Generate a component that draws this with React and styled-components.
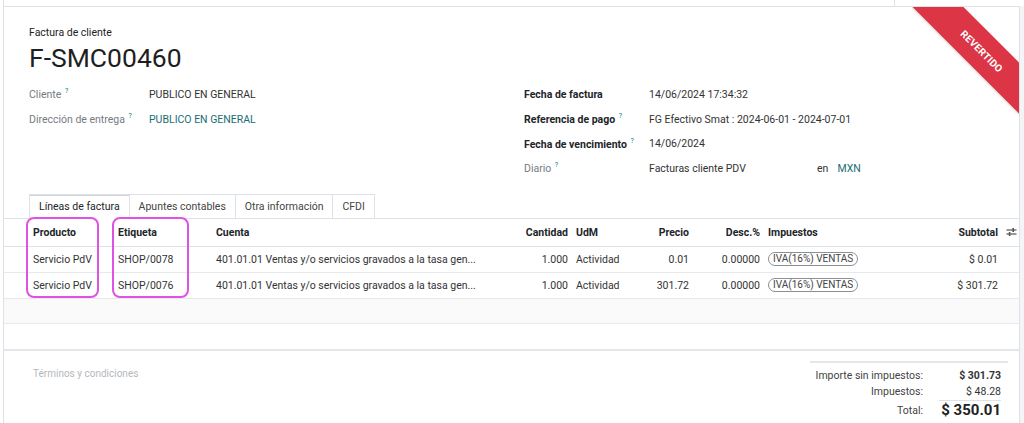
import React from "react";
import styled, { createGlobalStyle } from "styled-components";

const GlobalStyle = createGlobalStyle`
  html, body {
    margin: 0;
    padding: 0;
    background: #fff;
    font-family: Roboto, "Liberation Sans", Arial, sans-serif;
    color: #212529;
  }
`;

const lines = [
  { product: "Servicio PdV", label: "SHOP/0078", price: "0.01", subtotal: "$ 0.01" },
  { product: "Servicio PdV", label: "SHOP/0076", price: "301.72", subtotal: "$ 301.72" }
];

const columns = [
  { title: "Producto", width: 110, pad: "0 4px 0 29px" },
  { title: "Etiqueta", width: 98 },
  { title: "Cuenta", width: 300 },
  { title: "Cantidad", width: 60, right: true },
  { title: "UdM", width: 58 },
  { title: "Precio", width: 63, right: true },
  { title: "Desc.%", width: 71, right: true },
  { title: "Impuestos", width: 96 },
  { title: "Subtotal", width: 142, right: true },
  { title: "", width: 17 }
];

const Help = () => <Sup>?</Sup>;

const SlidersIcon = () => (
  <svg width="11" height="10" viewBox="0 0 11 10" fill="none">
    <line x1="0.5" y1="3" x2="10.5" y2="3" stroke="#555" strokeWidth="1.2" />
    <line x1="0.5" y1="7" x2="10.5" y2="7" stroke="#555" strokeWidth="1.2" />
    <rect x="6.4" y="1" width="1.6" height="4" fill="#555" />
    <rect x="2.8" y="5" width="1.6" height="4" fill="#555" />
  </svg>
);

export default function App() {
  return (
    <Page>
      <GlobalStyle />
      <TopStrip>
        <StripCell />
        <StripCell $narrow />
      </TopStrip>
      <Body>
        <Sheet>
          <Ribbon>
            <RibbonBand>REVERTIDO</RibbonBand>
          </Ribbon>
          <Header>
            <Subtitle>Factura de cliente</Subtitle>
            <Title>F-SMC00460</Title>
            <Groups>
              <Group $labelWidth={120}>
                <Label>
                  Cliente <Help />
                </Label>
                <Value>PUBLICO EN GENERAL</Value>
                <Label>
                  Dirección de entrega <Help />
                </Label>
                <Value $link>PUBLICO EN GENERAL</Value>
              </Group>
              <Group $labelWidth={125}>
                <Label $strong>Fecha de factura</Label>
                <Value>14/06/2024 17:34:32</Value>
                <Label $strong>
                  Referencia de pago <Help />
                </Label>
                <Value>FG Efectivo Smat : 2024-06-01 - 2024-07-01</Value>
                <Label $strong>
                  Fecha de vencimiento <Help />
                </Label>
                <Value>14/06/2024</Value>
                <Label>
                  Diario <Help />
                </Label>
                <Value>
                  <Journal>Facturas cliente PDV</Journal>
                  <span>en</span>
                  <Currency>MXN</Currency>
                </Value>
              </Group>
            </Groups>
          </Header>

          <Tabs>
            <Tab $active>Líneas de factura</Tab>
            <Tab>Apuntes contables</Tab>
            <Tab>Otra información</Tab>
            <Tab>CFDI</Tab>
          </Tabs>

          <TableWrap>
            <Table>
              <colgroup>
                {columns.map((c, i) => (
                  <col key={i} style={{ width: c.width }} />
                ))}
              </colgroup>
              <thead>
                <tr>
                  {columns.map((c, i) => (
                    <Th key={i} $right={c.right} $pad={c.pad}>
                      {i === columns.length - 1 ? <SlidersIcon /> : c.title}
                    </Th>
                  ))}
                </tr>
              </thead>
              <tbody>
                {lines.map((l, i) => (
                  <Row key={i}>
                    <Td $pad="0 4px 0 29px">{l.product}</Td>
                    <Td>{l.label}</Td>
                    <Td>401.01.01 Ventas y/o servicios gravados a la tasa gen...</Td>
                    <Td $right>1.000</Td>
                    <Td>Actividad</Td>
                    <Td $right>{l.price}</Td>
                    <Td $right>0.00000</Td>
                    <Td>
                      <TaxPill>IVA(16%) VENTAS</TaxPill>
                    </Td>
                    <Td $right>{l.subtotal}</Td>
                    <Td />
                  </Row>
                ))}
                <EmptyRow>
                  <td colSpan={columns.length} />
                </EmptyRow>
              </tbody>
            </Table>
            <Highlight $left={22} $width={73} />
            <Highlight $left={108} $width={77} />
          </TableWrap>

          <Spacer />

          <Footer>
            <Terms>Términos y condiciones</Terms>
            <Totals>
              <TotalLabel>Importe sin impuestos:</TotalLabel>
              <TotalValue $strong>$ 301.73</TotalValue>
              <TotalLabel>Impuestos:</TotalLabel>
              <TotalValue>$ 48.28</TotalValue>
              <TotalLabel $big>Total:</TotalLabel>
              <GrandTotal>$ 350.01</GrandTotal>
            </Totals>
          </Footer>
        </Sheet>
        <Gutter />
      </Body>
    </Page>
  );
}

const Page = styled.div`
  width: 1024px;
  height: 423px;
  overflow: hidden;
  display: flex;
  flex-direction: column;
  background: #fff;
`;

const TopStrip = styled.div`
  height: 6px;
  display: flex;
  margin-left: 3px;
  margin-right: 4px;
  border-left: 1px solid #dee2e6;
`;

const StripCell = styled.div`
  flex: ${p => (p.$narrow ? "0 0 125px" : "1")};
  border-left: ${p => (p.$narrow ? "1px solid #dee2e6" : "none")};
`;

const Body = styled.div`
  flex: 1;
  display: flex;
  padding-left: 3px;
`;

const Sheet = styled.div`
  flex: 1;
  position: relative;
  overflow: hidden;
  background: #fff;
  border: 1px solid #dee2e6;
  border-bottom: none;
  display: flex;
  flex-direction: column;
`;

const Gutter = styled.div`
  width: 4px;
  background: #f4f5f7;
`;

const Ribbon = styled.div`
  position: absolute;
  top: 0;
  right: 0;
  width: 107px;
  height: 107px;
  overflow: hidden;
  pointer-events: none;
`;

const RibbonBand = styled.div`
  position: absolute;
  left: -11px;
  top: 26px;
  width: 162px;
  height: 36px;
  transform: rotate(45deg);
  background: #dc3545;
  color: #fff;
  font-size: 10px;
  font-weight: 700;
  letter-spacing: 0.2px;
  display: flex;
  align-items: center;
  justify-content: center;
  box-shadow: 0 1px 3px rgba(0, 0, 0, 0.15);
`;

const Header = styled.div`
  padding: 19px 25px 0;
`;

const Subtitle = styled.div`
  font-size: 10.5px;
  line-height: 14px;
  color: #222;
`;

const Title = styled.h1`
  margin: 3px 0 0;
  font-size: 26.5px;
  line-height: 30px;
  font-weight: 400;
  color: #1f1f1f;
`;

const Groups = styled.div`
  display: grid;
  grid-template-columns: 495px 1fr;
  margin-top: 9px;
`;

const Group = styled.div`
  display: grid;
  grid-template-columns: ${p => p.$labelWidth}px 1fr;
  grid-auto-rows: 24.7px;
  align-items: center;
  font-size: 10.5px;
`;

const Label = styled.div`
  color: ${p => (p.$strong ? "#212529" : "#777b80")};
  font-weight: ${p => (p.$strong ? 700 : 400)};
  white-space: nowrap;
`;

const Sup = styled.sup`
  color: #017e84;
  font-size: 7px;
  font-weight: 400;
  vertical-align: 5px;
  margin-left: 1px;
`;

const Value = styled.div`
  color: ${p => (p.$link ? "#1b6d73" : "#333")};
  display: flex;
  white-space: nowrap;
`;

const Journal = styled.span`
  width: 168px;
`;

const Currency = styled.span`
  color: #1b6d73;
  margin-left: 9px;
`;

const Tabs = styled.div`
  display: flex;
  margin-top: 13px;
  padding-left: 25px;
  border-bottom: 1px solid #dee2e6;
`;

const Tab = styled.div`
  height: 23px;
  padding: 0 9px;
  display: flex;
  align-items: center;
  font-size: 10.5px;
  color: ${p => (p.$active ? "#212529" : "#444")};
  background: #fff;
  border-top: 1px solid #dee2e6;
  border-right: 1px solid #dee2e6;
  border-left: ${p => (p.$active ? "1px solid #dee2e6" : "none")};
  border-bottom: 1px solid ${p => (p.$active ? "#fff" : "#dee2e6")};
  margin-bottom: -1px;
  box-shadow: ${p => (p.$active ? "inset 0 1px 0 #ced4da" : "none")};
`;

const TableWrap = styled.div`
  position: relative;
`;

const Table = styled.table`
  width: 1015px;
  table-layout: fixed;
  border-collapse: collapse;
  font-size: 10.5px;
`;

const Th = styled.th`
  height: 27px;
  padding: ${p => p.$pad || "0 4px"};
  text-align: ${p => (p.$right ? "right" : "left")};
  font-weight: 700;
  color: #212529;
  border-bottom: 1px solid #dee2e6;
  white-space: nowrap;
  vertical-align: middle;
  svg {
    display: block;
  }
`;

const Row = styled.tr`
  height: 26px;
  border-bottom: 1px solid #e7e9ed;
`;

const Td = styled.td`
  padding: ${p => p.$pad || "0 4px"};
  text-align: ${p => (p.$right ? "right" : "left")};
  color: #333;
  white-space: nowrap;
  overflow: hidden;
`;

const EmptyRow = styled.tr`
  height: 25px;
  background: #fafafb;
  border-bottom: 1px solid #e7e9ed;
`;

const TaxPill = styled.span`
  display: inline-block;
  border: 1px solid #8a8f95;
  border-radius: 8px;
  padding: 0 4px;
  line-height: 12px;
  font-size: 10px;
  color: #444;
`;

const Highlight = styled.div`
  position: absolute;
  top: -2px;
  left: ${p => p.$left}px;
  width: ${p => p.$width}px;
  height: 81px;
  border: 2px solid #e052e3;
  border-radius: 8px;
  box-sizing: border-box;
  pointer-events: none;
`;

const Spacer = styled.div`
  height: 25px;
  border-bottom: 2px solid #e4e6ea;
`;

const Footer = styled.div`
  display: flex;
  justify-content: space-between;
  align-items: flex-start;
  padding: 10px 11px 0 29px;
`;

const Terms = styled.div`
  margin-top: 7px;
  font-size: 10px;
  color: #b4b8bd;
`;

const Totals = styled.div`
  width: 198px;
  border-top: 2px solid #e4e6ea;
  display: grid;
  grid-template-columns: 113px 1fr;
  column-gap: 4px;
  align-items: center;
  padding: 5px 7px 0 0;
  box-sizing: border-box;
  font-size: 10.5px;
`;

const TotalLabel = styled.div`
  text-align: right;
  color: #444;
  line-height: 16px;
  padding-top: ${p => (p.$big ? "3px" : "0")};
`;

const TotalValue = styled.div`
  text-align: right;
  line-height: 16px;
  color: #333;
  font-weight: ${p => (p.$strong ? 700 : 400)};
`;

const GrandTotal = styled.div`
  justify-self: end;
  text-align: right;
  font-size: 15px;
  font-weight: 700;
  line-height: 19px;
  color: #222;
  border-top: 1px solid #dee2e6;
  min-width: 62px;
  white-space: nowrap;
`;
